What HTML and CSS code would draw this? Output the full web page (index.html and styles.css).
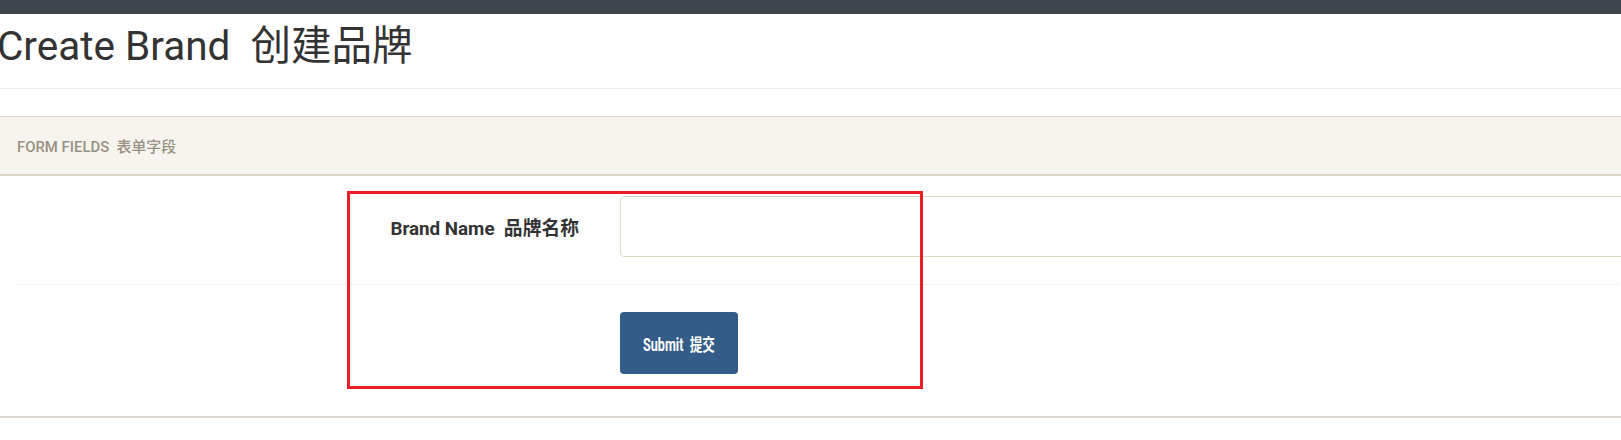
FILE: index.html
```html
<!DOCTYPE html>
<html lang="zh">
<head>
<meta charset="utf-8">
<title>Create Brand</title>
<link rel="stylesheet" href="styles.css">
</head>
<body>
<div class="topbar"></div>
<h1 class="title">Create Brand&nbsp;&nbsp;创建品牌</h1>
<div class="divider"></div>
<section class="panel">
  <div class="panel-heading">FORM FIELDS&nbsp;&nbsp;表单字段</div>
  <div class="panel-body">
    <div class="form-row">
      <label class="form-label" for="brand">Brand Name&nbsp;&nbsp;品牌名称</label>
      <input class="form-input" id="brand" type="text">
    </div>
    <div class="form-actions">
      <span></span>
      <button class="btn-submit" type="button"><span class="btn-text">Submit&nbsp;&nbsp;提交</span></button>
    </div>
  </div>
</section>
<div class="annotation"></div>
</body>
</html>
```
FILE: styles.css
```css
html, body {
  margin: 0;
  padding: 0;
  background: #ffffff;
  overflow: hidden;
}
body {
  font-family: Roboto, "Noto Sans CJK SC", sans-serif;
  color: #333333;
  position: relative;
  width: 1621px;
  height: 440px;
}
.topbar {
  height: 14px;
  background: #3d434b;
}
.title {
  margin: 8px 0 0 -3px;
  font-size: 40.5px;
  line-height: 48px;
  font-weight: 400;
  color: #333333;
  white-space: nowrap;
}
.divider {
  margin-top: 18px;
  height: 1px;
  background: #eeeeee;
}
.panel {
  margin-top: 27px;
  width: 1660px;
  border-bottom: 2px solid #ddd9d0;
}
.panel-heading {
  height: 57px;
  box-sizing: content-box;
  border-top: 1px solid #ddd5c6;
  border-bottom: 2px solid #ddd5c6;
  background: #f7f4ef;
  display: flex;
  align-items: center;
  padding-left: 17px;
  font-size: 14.9px;
  font-weight: 500;
  color: #979184;
}
.panel-body {
  padding: 20px 0 42px 17px;
}
.form-row {
  display: grid;
  grid-template-columns: 603px 1fr;
  align-items: center;
  padding-bottom: 27px;
  border-bottom: 1px dotted #e3e6ea;
}
.form-label {
  text-align: right;
  padding-right: 41px;
  font-size: 18.8px;
  font-weight: 700;
  color: #333333;
  white-space: nowrap;
}
.form-input {
  height: 61px;
  box-sizing: border-box;
  border: 1px solid #ddd8c4;
  border-radius: 4px;
  background: #ffffff;
  margin: 0;
  padding: 0 12px;
  font-size: 16px;
}
.form-actions {
  display: grid;
  grid-template-columns: 603px auto;
  justify-content: start;
  padding-top: 27px;
}
.btn-submit {
  width: 118px;
  height: 62px;
  border: none;
  border-radius: 4px;
  background: #335d88;
  color: #ffffff;
  font-family: Roboto, "Noto Sans CJK SC", sans-serif;
  font-size: 17.5px;
  font-weight: 700;
  padding: 0;
  display: flex;
  align-items: center;
  justify-content: center;
}
.btn-text {
  display: inline-block;
  white-space: nowrap;
  transform: scaleX(0.72);
}
.annotation {
  position: absolute;
  left: 347px;
  top: 191px;
  width: 570px;
  height: 192px;
  border: 3px solid #ee1c25;
  pointer-events: none;
}
```
